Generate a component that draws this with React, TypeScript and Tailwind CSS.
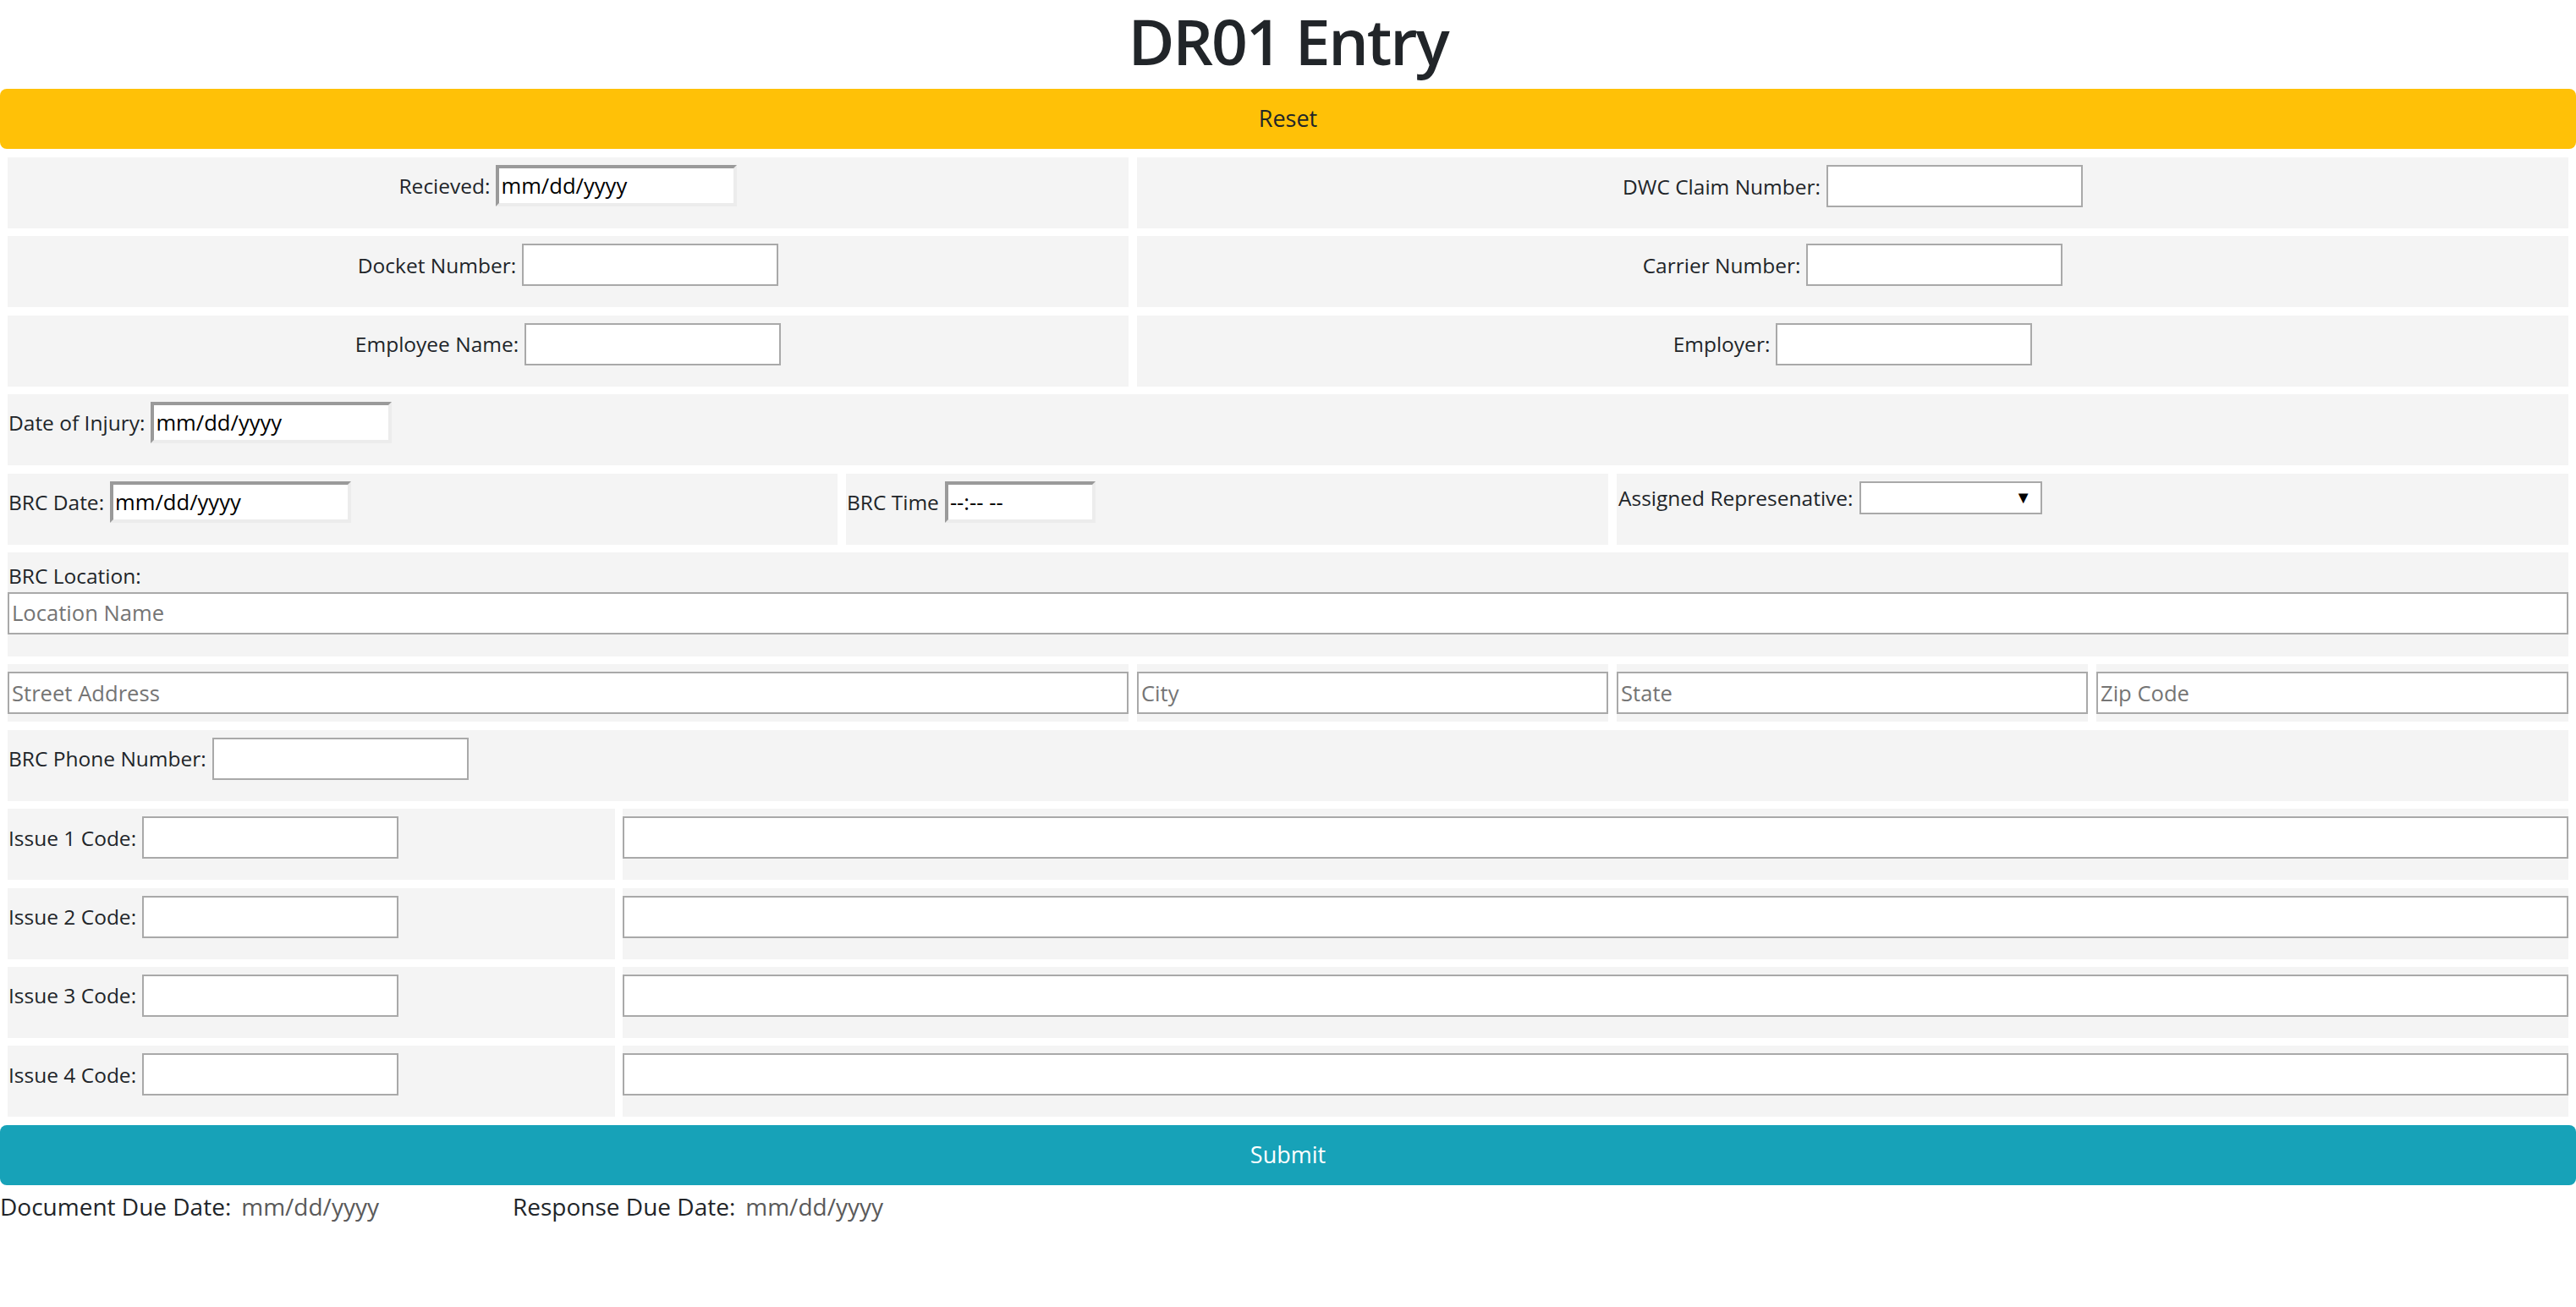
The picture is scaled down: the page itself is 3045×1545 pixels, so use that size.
import type { ReactNode } from 'react';

const font = { fontFamily: '"Open Sans", "Noto Sans", sans-serif' };

const textInput =
  'h-[50px] w-[303px] border-2 border-[#a9a9a9] bg-white px-[3px] text-[25.6px] text-black outline-none placeholder:text-[#757575]';
const dateInput =
  'h-[49px] w-[285px] border-4 border-t-[#9a9a9a] border-l-[#9a9a9a] border-r-[#ececec] border-b-[#ececec] bg-white px-[2px] text-[25.6px] outline-none placeholder:text-black';
const wideInput =
  'h-[50px] w-full border-2 border-[#a9a9a9] bg-white px-[3px] text-[25.6px] text-black outline-none placeholder:text-[#757575]';

function Cell({ children, className = '' }: { children?: ReactNode; className?: string }) {
  return <div className={`bg-[#f4f4f4] ${className}`}>{children}</div>;
}

function Field({
  label,
  children,
  center,
  className = '',
}: {
  label: string;
  children: ReactNode;
  center?: boolean;
  className?: string;
}) {
  return (
    <Cell
      className={`flex h-[84px] items-baseline gap-[7px] pt-[9px] ${center ? 'justify-center' : 'pl-[1px]'} ${className}`}
    >
      <label className="whitespace-nowrap">{label}</label>
      {children}
    </Cell>
  );
}

export default function App() {
  return (
    <div className="min-h-screen bg-white text-[24.5px] leading-[1.5] text-[#212529]" style={font}>
      <h1 className="mb-[9px] text-center text-[75px] font-semibold leading-[96px] tracking-[-2.2px] text-[#212529]">
        DR01 Entry
      </h1>

      <button className="block h-[71px] w-full rounded-[8px] bg-[#ffc107] text-[27px] text-[#212529]">
        Reset
      </button>

      <form className="flex flex-col gap-[9.4px] px-[9px] pb-[9.4px] pt-[10px]" onSubmit={(e) => e.preventDefault()}>
        <div className="flex gap-[10px]">
          <Field label="Recieved:" center className="w-[1325px]">
            <input className={dateInput} placeholder="mm/dd/yyyy" />
          </Field>
          <Field label="DWC Claim Number:" center className="flex-1">
            <input className={textInput} />
          </Field>
        </div>

        <div className="flex gap-[10px]">
          <Field label="Docket Number:" center className="w-[1325px]">
            <input className={textInput} />
          </Field>
          <Field label="Carrier Number:" center className="flex-1">
            <input className={textInput} />
          </Field>
        </div>

        <div className="flex gap-[10px]">
          <Field label="Employee Name:" center className="w-[1325px]">
            <input className={textInput} />
          </Field>
          <Field label="Employer:" center className="flex-1">
            <input className={textInput} />
          </Field>
        </div>

        <Field label="Date of Injury:">
          <input className={dateInput} placeholder="mm/dd/yyyy" />
        </Field>

        <div className="flex gap-[10px]">
          <Field label="BRC Date:" className="w-[981px]">
            <input className={dateInput} placeholder="mm/dd/yyyy" />
          </Field>
          <Field label="BRC Time" className="w-[901px]">
            <input className={`${dateInput} !w-[178px]`} placeholder="--:-- --" />
          </Field>
          <Cell className="flex h-[84px] flex-1 items-start gap-[7px] pl-[2px] pt-[9px]">
            <label className="mt-[-8px] whitespace-nowrap leading-[56px]">Assigned Represenative:</label>
            <div className="relative">
              <select className="h-[39px] w-[216px] appearance-none border-2 border-[#a9a9a9] bg-white text-[22px] outline-none">
                <option value=""></option>
              </select>
              <span className="pointer-events-none absolute right-[12px] top-[6px] text-[20px] leading-[26px] text-black">
                ▼
              </span>
            </div>
          </Cell>
        </div>

        <Cell className="flex h-[123px] flex-col pl-0 pt-[10px]">
          <label className="pl-[1px]">BRC Location:</label>
          <input className={wideInput} placeholder="Location Name" />
        </Cell>

        <div className="flex gap-[10px]">
          <Cell className="w-[1325px] py-[9px]">
            <input className={wideInput} placeholder="Street Address" />
          </Cell>
          <Cell className="w-[557px] py-[9px]">
            <input className={wideInput} placeholder="City" />
          </Cell>
          <Cell className="w-[557px] py-[9px]">
            <input className={wideInput} placeholder="State" />
          </Cell>
          <Cell className="flex-1 py-[9px]">
            <input className={wideInput} placeholder="Zip Code" />
          </Cell>
        </div>

        <Field label="BRC Phone Number:">
          <input className={textInput} />
        </Field>

        {[1, 2, 3, 4].map((n) => (
          <div key={n} className="flex gap-[9px]">
            <Field label={`Issue ${n} Code:`} className="w-[718px]">
              <input className={textInput} />
            </Field>
            <Cell className="h-[84px] flex-1 pt-[9px]">
              <input className={wideInput} />
            </Cell>
          </div>
        ))}
      </form>

      <button className="block h-[71px] w-full rounded-[8px] bg-[#17a2b8] text-[27px] text-white">
        Submit
      </button>

      <div className="mt-[4px] flex text-[28px] leading-[42px]">
        <div className="w-[606px]">
          Document Due Date:<span className="ml-[12px] text-[#5a5a5a]">mm/dd/yyyy</span>
        </div>
        <div>
          Response Due Date:<span className="ml-[12px] text-[#5a5a5a]">mm/dd/yyyy</span>
        </div>
      </div>
    </div>
  );
}
